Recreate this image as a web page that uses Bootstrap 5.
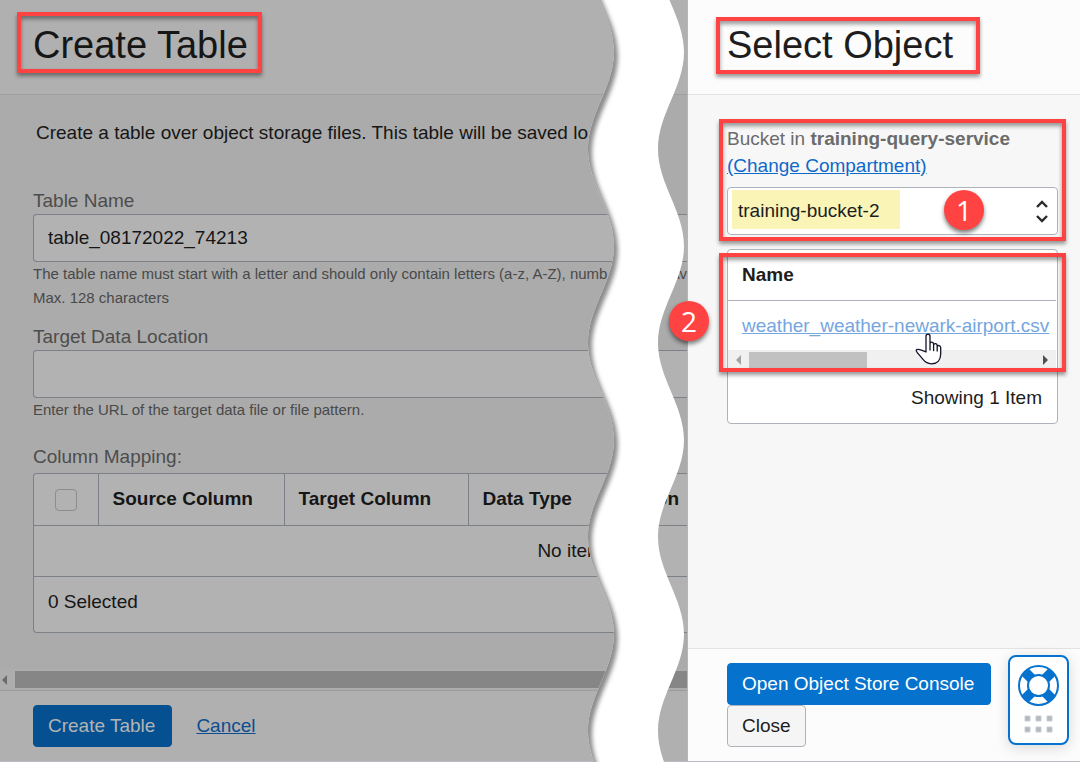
<!DOCTYPE html>
<html lang="en">
<head>
<meta charset="utf-8">
<meta name="viewport" content="width=device-width, initial-scale=1">
<title>Create Table</title>
<link href="https://cdn.jsdelivr.net/npm/bootstrap@5.3.0/dist/css/bootstrap.min.css" rel="stylesheet">
<style>
  :root { --brand: #0572ce; --line: #aeb3bb; --dim-line: #7b8187; --callout: #ff4343; }
  body { font-family: "Liberation Sans", Arial, sans-serif; font-size: 19px; line-height: 24px; color: #1d1d1d; background: #fff; padding-bottom: 2px; }
  .shell { min-height: calc(100vh - 2px); }
  .title { font-size: 38px; line-height: 48px; font-weight: 400; margin: 0; white-space: nowrap; }
  .frame { border: 4px solid var(--callout); box-shadow: 0 3px 4px rgba(0,0,0,.4), inset 0 3px 4px rgba(0,0,0,.4); }
  .marker { width: 40px; height: 40px; border-radius: 50%; background: var(--callout); color: #fff; font: 28px/40px "Open Sans", sans-serif; text-align: center; box-shadow: 0 3px 4px rgba(0,0,0,.5); z-index: 3; }
  .btn { font-size: 19px; line-height: 24px; padding: 8px 14px; border-radius: 4px; white-space: nowrap; }
  .blue { background: var(--brand); border-color: var(--brand); color: #fff; padding-right: 16px; }
  .plain { background: #f5f5f5; border-color: var(--line); color: #1d1d1d; }

  /* dimmed page behind the drawer */
  .backdrop-page { background: #ababab; color: #161616; min-width: 0; border-right: 1px solid #b6b6b6; }
  .backdrop-head { height: 95px; background: #b0b0b0; border-bottom: 1px solid #9f9f9f; padding: 12px 17px; }
  .backdrop-head .title { padding: 5px 10px 0 12px; }
  .backdrop-foot { background: #b0b0b0; border-top: 1px solid #9c9c9c; border-bottom: 1px solid #b9bdc4; padding: 14px 33px; gap: 24px; }
  .backdrop-foot .blue { background: #045091; border-color: #045091; color: #b4b4b4; }
  .backdrop-foot a { color: #0b4d91; }
  .intro { padding: 26px 0 0 3px; margin-bottom: 44px; white-space: nowrap; }
  .fields { padding-left: 33px; }
  .fields label, .caption-line { color: #4d4d4d; margin-bottom: 1px; display: block; }
  .fields .form-control { height: 48px; background: #b2b2b2; border: 1px solid var(--dim-line); border-right: 0; border-radius: 4px 0 0 4px; font-size: 19px; padding: 0 14px; color: #161616; }
  .help { font-size: 15px; color: #494949; white-space: nowrap; }
  .help-last { margin-bottom: 15px; }
  .caption-line { padding: 23px 0 3px; }
  .map-box { border: 1px solid var(--dim-line); border-right: 0; border-radius: 4px 0 0 4px; background: #b2b2b2; }
  .map-table { table-layout: fixed; width: 100%; border-collapse: collapse; white-space: nowrap; }
  .map-table th, .map-table td { border: 0 solid var(--dim-line); border-bottom-width: 1px; padding: 0 14px; height: 51px; overflow: hidden; }
  .map-table .rule { border-right-width: 1px; }
  .map-table .form-check-input { width: 22px; height: 22px; margin: 0; background-color: transparent; border-color: #8c8c90; border-radius: 4px; vertical-align: middle; }
  .selected-count { padding: 13px 14px 18px; }
  .track { height: 21px; background: #adadad; padding: 2px 0 2px 2px; gap: 8px; }
  .track .thumb { height: 17px; background: #868686; }
  .tear { position: absolute; top: 0; right: 0; width: 100px; height: 100%; z-index: 1; }

  /* drawer */
  .drawer { flex: 0 0 392px; background: #f7f7f7; z-index: 2; }
  .drawer-head { height: 95px; background: #fcfcfc; border-bottom: 1px solid #e3e3e3; padding: 17px 28px; }
  .drawer-head .title { padding: 0 23px 1px 7px; }
  .drawer-main { padding: 24px 14px 24px 31px; }
  .bucket { padding: 2px 4px; }
  .bucket label { line-height: 27px; color: #6b6b6b; display: block; }
  .bucket a { line-height: 27px; color: #0f69c9; }
  .bucket .form-select { height: 48px; border: 1px solid var(--line); border-radius: 4px; font-size: 19px; padding: 0 40px 0 10px; color: #1d1d1d; background: linear-gradient(#faf4b7,#faf4b7) 4px 2px / 168px 39px no-repeat #fff; }
  .chevrons { position: absolute; right: 8px; top: 13px; }
  .bucket .marker { right: 74px; top: 3px; }
  .objects { border: 1px solid var(--line); border-radius: 4px; background: #fff; margin: 8px; margin-bottom: 0; }
  .objects .frame { left: -9px; right: -9px; top: 3px; height: 119px; pointer-events: none; }
  .objects .marker { left: -59px; top: 51px; }
  .objects table { width: calc(100% - 1px); }
  .objects th { padding: 13px 14px 13px; border-bottom: 1px solid var(--line); }
  .objects td { padding: 13px 0 12px 14px; white-space: nowrap; }
  .objects td a { color: #75a6e0; }
  .bar { height: 20px; background: #f0f0f0; padding: 2px 8px; margin-right: 1px; gap: 8px; }
  .bar .thumb { width: 118px; height: 16px; background: #c1c1c1; }
  .tally { padding: 16px 15px 13px; text-align: right; }
  .hand { position: absolute; left: 187px; top: 83px; z-index: 3; }
  .drawer-foot { background: #fcfcfc; border-top: 1px solid #e3e3e3; border-bottom: 1px solid #b9bdc4; padding: 14px 39px; }
  .helper { position: absolute; right: 11px; bottom: 16px; width: 61px; height: 90px; padding: 0; background: #fff; border: 2px solid var(--brand); border-radius: 8px; box-shadow: 0 3px 14px rgba(0,0,0,.14); }
</style>
</head>
<body>
<div class="shell d-flex">

  <main class="backdrop-page position-relative flex-grow-1 d-flex flex-column overflow-hidden">
    <header class="backdrop-head d-flex align-items-start">
      <h1 class="title frame">Create Table</h1>
    </header>

    <form class="fields">
      <p class="intro">Create a table over object storage files. This table will be saved lo</p>

      <label for="table-name">Table Name</label>
      <input class="form-control" id="table-name" type="text" value="table_08172022_74213">
      <div class="help d-flex justify-content-between">
        <span>The table name must start with a letter and should only contain letters (a-z, A-Z), numb</span>
        <span>Av</span>
      </div>
      <div class="help help-last">Max. 128 characters</div>

      <label for="target-location">Target Data Location</label>
      <input class="form-control" id="target-location" type="text">
      <div class="help">Enter the URL of the target data file or file pattern.</div>

      <div class="caption-line" id="mapping">Column Mapping:</div>
      <div class="map-box">
        <table class="map-table" aria-labelledby="mapping">
          <colgroup><col style="width:64px"><col style="width:186px"><col style="width:184px"><col style="width:150px"><col></colgroup>
          <thead>
            <tr>
              <th class="rule text-center px-0"><input class="form-check-input" type="checkbox" aria-label="Select all columns"></th>
              <th class="rule">Source Column</th>
              <th class="rule">Target Column</th>
              <th class="rule">Data Type</th>
              <th class="text-end px-2">on</th>
            </tr>
          </thead>
          <tbody>
            <tr><td colspan="3"></td><td colspan="2" class="text-center">No items.</td></tr>
          </tbody>
        </table>
        <div class="selected-count">0 Selected</div>
      </div>
    </form>

    <div class="mt-auto">
      <div class="track d-flex align-items-center" aria-hidden="true">
        <svg width="5" height="10" viewBox="0 0 5 10"><path d="M5 0v10L0 5z" fill="#6c6c6c"/></svg>
        <div class="thumb flex-grow-1"></div>
      </div>
      <footer class="backdrop-foot d-flex align-items-center">
        <button type="button" class="btn blue">Create Table</button>
        <a href="#">Cancel</a>
      </footer>
    </div>

    <!-- torn strip: one wave per 194px, repeated down the page -->
    <svg class="tear" aria-hidden="true">
      <defs>
        <filter id="soft" x="-50%" y="-20%" width="200%" height="140%"><feGaussianBlur stdDeviation="2"/></filter>
        <clipPath id="strip"><path d="M1-194C1-159 27-132 27-97S1-35 1 0S27 62 27 97S1 159 1 194S27 256 27 291S1 353 1 388H71C71 353 97 326 97 291S71 229 71 194S97 132 97 97S71 35 71 0S97-62 97-97S71-159 71-194Z"/></clipPath>
        <pattern id="wave" patternUnits="userSpaceOnUse" x="0" y="-45" width="100" height="194">
          <g clip-path="url(#strip)">
            <rect y="-194" width="100" height="582" fill="#fff"/>
            <path filter="url(#soft)" transform="translate(4 4)" fill="#8c8c8c" d="M1-194C1-159 27-132 27-97S1-35 1 0S27 62 27 97S1 159 1 194S27 256 27 291S1 353 1 388H-30V-194Z"/>
          </g>
        </pattern>
      </defs>
      <rect width="100" height="100%" fill="url(#wave)"/>
    </svg>
  </main>

  <aside class="drawer d-flex flex-column">
    <header class="drawer-head d-flex align-items-start">
      <h2 class="title frame">Select Object</h2>
    </header>

    <section class="drawer-main">
      <div class="bucket frame">
        <label for="bucket">Bucket in <b>training-query-service</b></label>
        <a href="#">(Change Compartment)</a>
        <div class="position-relative mt-2">
          <select class="form-select" id="bucket"><option>training-bucket-2</option></select>
          <svg class="chevrons" width="14" height="23" viewBox="0 0 14 23" fill="none" stroke="#2b2b2b" stroke-width="2.400" aria-hidden="true"><path d="M1 7l5-5 5 5M1 16l5 5 5-5"/></svg>
          <span class="marker position-absolute">1</span>
        </div>
      </div>

      <div class="objects position-relative">
        <table>
          <thead><tr><th>Name</th></tr></thead>
          <tbody><tr><td><a href="#">weather_weather-newark-airport.csv</a></td></tr></tbody>
        </table>
        <div class="bar d-flex align-items-center" aria-hidden="true">
          <svg width="5" height="10" viewBox="0 0 5 10"><path d="M5 0v10L0 5z" fill="#a3a3a3"/></svg>
          <div class="thumb"></div>
          <svg class="ms-auto" width="5" height="10" viewBox="0 0 5 10"><path d="M0 0v10L5 5z" fill="#505050"/></svg>
        </div>
        <div class="tally">Showing 1 Item</div>
        <div class="frame position-absolute"></div>
        <span class="marker position-absolute">2</span>
        <svg class="hand" width="28" height="32" viewBox="0 0 28 32" aria-hidden="true"><path d="M11 19V3.2C11 .3 15 .3 15 3.2V11c0-2.600 3.600-2.300 3.600.2V12c.4-2 3.600-1.600 3.600.6v1c.6-1.800 3.500-1.300 3.500 1v6.500c0 6-3.600 9.700-9.200 9.700-4 0-6.500-1.800-8.700-4.600L2.300 19.600C.6 17.500 1 16.300 3 16.300c2.300 0 4.800 1.100 8 2.700zM15 10v7M18.600 11.500v6M22.200 13v5" fill="#fff" stroke="#111127" stroke-width="1.300" stroke-linejoin="round" stroke-linecap="round"/></svg>
      </div>
    </section>

    <footer class="drawer-foot mt-auto position-relative d-flex flex-column align-items-start">
      <button type="button" class="btn blue">Open Object Store Console</button>
      <button type="button" class="btn plain">Close</button>
      <button type="button" class="helper" aria-label="Help">
        <svg class="d-block mx-auto" width="57" height="86" viewBox="0 0 57 86" aria-hidden="true">
          <g transform="translate(28.500 28.500)" fill="none">
            <circle r="19.500" fill="#fff"/>
            <path d="M-13.500-13.500L13.500 13.500M13.500-13.500L-13.500 13.500" stroke="#0572ce" stroke-width="10"/>
            <circle r="10.500" fill="#fff" stroke="#0572ce" stroke-width="2"/>
            <circle r="19.500" stroke="#0572ce" stroke-width="2"/>
          </g>
          <path d="M15 59h5v5h-5zM26 59h5v5h-5zM37 59h5v5h-5zM15 70h5v5h-5zM26 70h5v5h-5zM37 70h5v5h-5z" fill="#b4b9c1" stroke="#c8ccd2" stroke-width="1"/>
        </svg>
      </button>
    </footer>
  </aside>
</div>
<script src="https://cdn.jsdelivr.net/npm/bootstrap@5.3.0/dist/js/bootstrap.bundle.min.js"></script>
</body>
</html>
